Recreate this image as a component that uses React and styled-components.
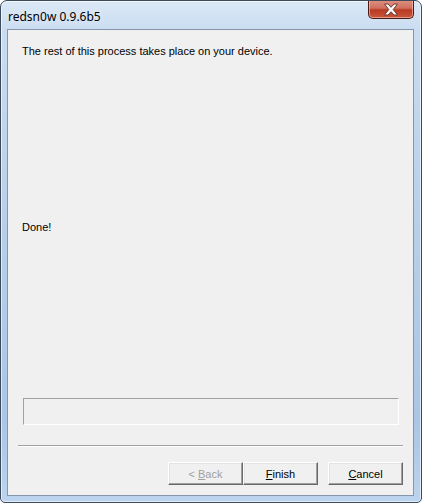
import React from "react";
import styled, { createGlobalStyle } from "styled-components";

const GlobalStyle = createGlobalStyle`
  html, body {
    margin: 0;
    padding: 0;
    background: #ffffff;
  }
`;

const Window = styled.div`
  width: 422px;
  height: 503px;
  box-sizing: border-box;
  border: 1px solid #3c4a5c;
  border-radius: 7px 7px 5px 5px;
  background: linear-gradient(
    180deg,
    #dbe8f6 0px,
    #c9dcf1 30px,
    #b9d1ea 200px,
    #a9c6e6 420px,
    #bcd4ee 503px
  );
  box-shadow: inset 0 0 0 1px rgba(255, 255, 255, 0.6);
  display: flex;
  flex-direction: column;
  padding: 0 7px 6px 6px;
  overflow: hidden;
`;

const TitleBar = styled.div`
  height: 28px;
  display: flex;
  align-items: flex-start;
  justify-content: space-between;
`;

const Title = styled.div`
  font-family: "Noto Sans", "Open Sans", sans-serif;
  font-size: 12px;
  color: #000;
  padding: 7px 0 0 1px;
  text-shadow: 0 0 8px rgba(255, 255, 255, 0.9);
`;

const CloseButton = styled.div`
  width: 46px;
  height: 19px;
  margin-top: -1px;
  box-sizing: border-box;
  border: 1px solid #4a1a14;
  border-top: none;
  border-radius: 0 0 5px 5px;
  background: linear-gradient(180deg, #e09282 0%, #d0705f 45%, #b93a22 55%, #c9563c 100%);
  box-shadow: inset 0 0 0 1px rgba(255, 210, 200, 0.55);
  display: flex;
  align-items: center;
  justify-content: center;
`;

const Client = styled.div`
  flex: 1;
  box-sizing: border-box;
  border: 1px solid #8595ab;
  background: #f0f0f0;
  display: flex;
  flex-direction: column;
  font-family: "Liberation Sans", Arial, sans-serif;
  font-size: 11px;
  color: #000;
`;

const Message = styled.div`
  padding-left: ${(p) => p.$indent}px;
  margin-top: ${(p) => p.$top}px;
  line-height: 13px;
`;

const ProgressBox = styled.div`
  margin: auto 14px 0 15px;
  height: 27px;
  box-sizing: border-box;
  border-top: 1px solid #a0a0a0;
  border-left: 1px solid #a0a0a0;
  border-right: 1px solid #ffffff;
  border-bottom: 1px solid #ffffff;
`;

const Separator = styled.div`
  margin: 20px 10px 0 10px;
  height: 0;
  border-top: 1px solid #a0a0a0;
  border-bottom: 1px solid #ffffff;
`;

const ButtonRow = styled.div`
  display: flex;
  justify-content: flex-end;
  padding: 15px 10px 10px 0;
`;

const Button = styled.div`
  width: 75px;
  height: 23px;
  box-sizing: border-box;
  margin-left: ${(p) => p.$gap || 0}px;
  display: flex;
  align-items: center;
  justify-content: center;
  background: #f0f0f0;
  color: ${(p) => (p.$disabled ? "#a0a0a0" : "#000")};
  border-top: 1px solid #ffffff;
  border-left: 1px solid #ffffff;
  border-right: 1px solid #696969;
  border-bottom: 1px solid #696969;
  box-shadow: inset -1px -1px 0 #a0a0a0, inset 1px 1px 0 #e3e3e3;
  u {
    text-decoration: underline;
    text-underline-offset: 1px;
  }
`;

function CloseGlyph() {
  return (
    <svg width="16" height="13" viewBox="0 0 16 13">
      <path
        d="M1.5 1 L5 1 L8 4.3 L11 1 L14.5 1 L10.2 6.5 L14.5 12 L11 12 L8 8.7 L5 12 L1.5 12 L5.8 6.5 Z"
        fill="#ffffff"
        stroke="#6a3a34"
        strokeWidth="1"
        strokeLinejoin="round"
      />
    </svg>
  );
}

export default function App() {
  return (
    <>
      <GlobalStyle />
      <Window>
        <TitleBar>
          <Title>redsn0w 0.9.6b5</Title>
          <CloseButton>
            <CloseGlyph />
          </CloseButton>
        </TitleBar>
        <Client>
          <Message $indent={14} $top={15}>
            The rest of this process takes place on your device.
          </Message>
          <Message $indent={14} $top={163}>
            Done!
          </Message>
          <ProgressBox />
          <Separator />
          <ButtonRow>
            <Button $disabled>
              &lt;&nbsp;<u>B</u>ack
            </Button>
            <Button>
              <u>F</u>inish
            </Button>
            <Button $gap={10}>
              <u>C</u>ancel
            </Button>
          </ButtonRow>
        </Client>
      </Window>
    </>
  );
}
